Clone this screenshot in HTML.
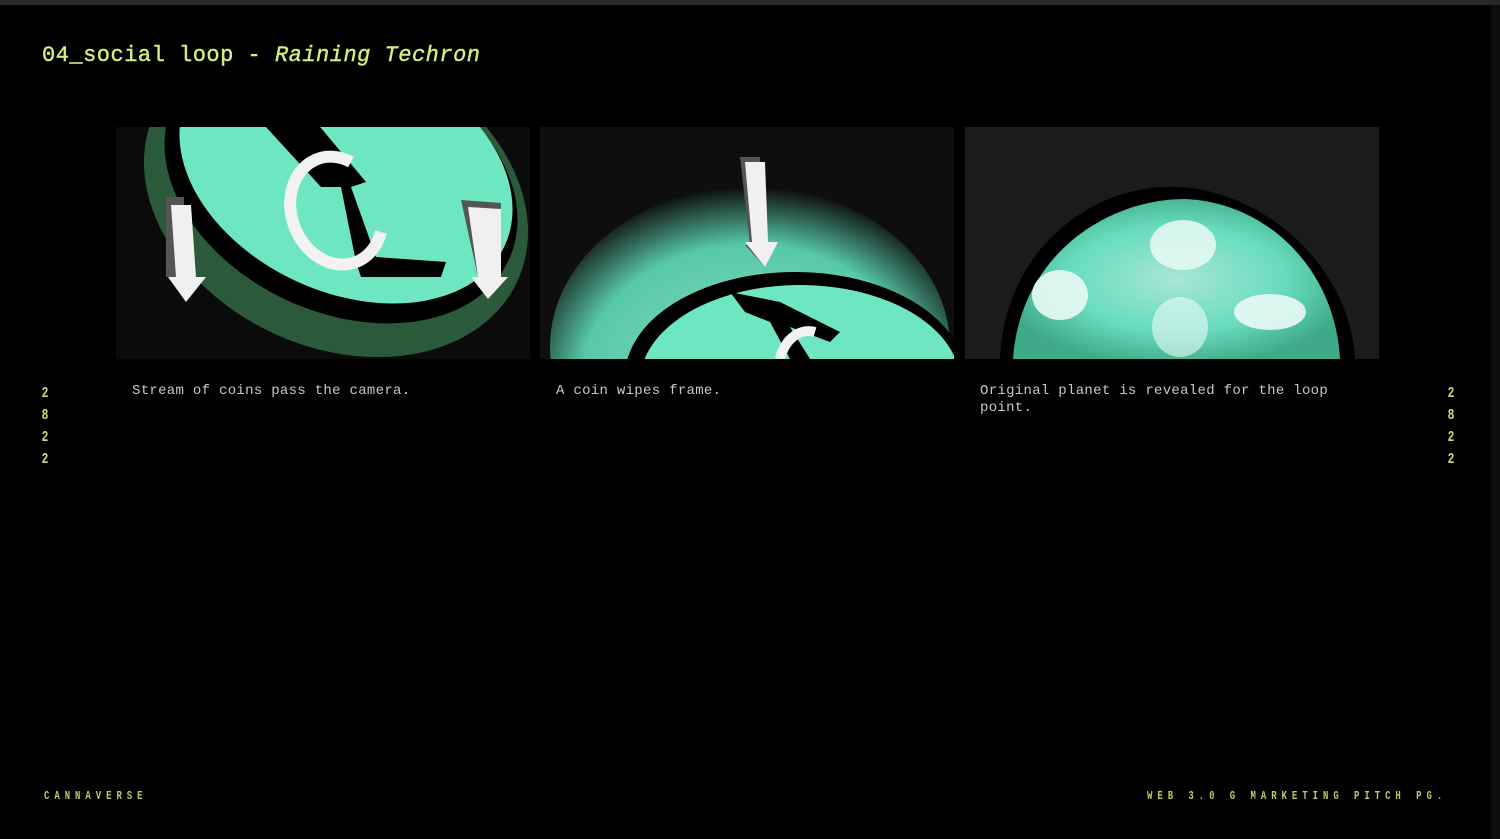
<!DOCTYPE html>
<html><head><style>
html,body{margin:0;padding:0;background:#000;width:1500px;height:839px;overflow:hidden;position:relative;font-family:"Liberation Mono",monospace}
.top{position:absolute;left:0;top:0;width:1500px;height:5px;background:#26272a}
.right{position:absolute;right:0;top:5px;width:9px;height:834px;background:#0d0d0e}
.title{position:absolute;left:42px;top:43px;font-size:22px;color:#d4f07c;letter-spacing:0.5px;white-space:nowrap;-webkit-text-stroke:0.4px #d4f07c}
.title i{font-style:italic}
.img{position:absolute;top:127px;width:414px;height:232px;overflow:hidden}
.cap{position:absolute;top:383px;font-size:14px;color:#c8c8c8;line-height:17px;letter-spacing:0.3px;width:380px}
.yr{position:absolute;top:383px;font-size:15px;font-weight:bold;color:#c9dc74;line-height:22px;width:10px;text-align:center;transform:scaleX(0.75)}
.foot{position:absolute;top:789px;font-size:12px;font-weight:bold;color:#b9cc6a;letter-spacing:6.6px;white-space:nowrap;transform:scaleX(0.75);transform-origin:left}
</style></head><body>
<div class="top"></div><div class="right"></div>
<div class="title">04_social loop - <i>Raining Techron</i></div>

<div class="img" style="left:116px;background:#0b0b0b">
<svg width="414" height="232">
<ellipse cx="220" cy="70" rx="200" ry="150" transform="rotate(25 220 70)" fill="#2a5a3a"/>
<ellipse cx="225" cy="55" rx="185" ry="130" transform="rotate(25 225 55)" fill="#000"/>
<ellipse cx="230" cy="45" rx="175" ry="120" transform="rotate(25 230 45)" fill="#6ee6c1"/>
<path d="M150 0 L200 -5 L250 55 L235 60 L260 130 L330 135 L325 150 L245 150 L240 135 L225 60 L205 60 Z" fill="#000"/>
<path d="M235 35 A45 55 -20 1 0 265 105" stroke="#f2f2f2" stroke-width="12" fill="none"/>
<path d="M50 70 L68 70 L68 150 L78 150 L70 175 L58 150 L50 150 Z" fill="#555"/>
<path d="M55 78 L75 78 L80 150 L90 150 L70 175 L52 150 L60 150 Z" fill="#f0f0f0"/>
<path d="M345 73 L385 76 L382 150 L392 150 L372 172 L355 150 L362 150 Z" fill="#555"/>
<path d="M352 80 L385 82 L385 150 L392 150 L372 172 L355 150 L362 150 Z" fill="#f0f0f0"/>
</svg></div>

<div class="img" style="left:540px;background:#0e0e0e">
<svg width="414" height="232">
<defs><radialGradient id="g1" cx="50%" cy="60%" r="60%"><stop offset="0" stop-color="#8fd9c6"/><stop offset="0.7" stop-color="#56c9a8"/><stop offset="1" stop-color="#0e0e0e"/></radialGradient></defs>
<ellipse cx="210" cy="220" rx="200" ry="160" fill="url(#g1)"/>
<ellipse cx="255" cy="250" rx="170" ry="105" fill="#000"/>
<ellipse cx="260" cy="255" rx="160" ry="97" fill="#6ee6c1"/>
<path d="M190 165 L240 175 L300 205 L290 215 L250 200 L270 232 L250 232 L230 195 L205 185 Z" fill="#000"/>
<path d="M240 232 A30 40 0 0 1 275 205" stroke="#f2f2f2" stroke-width="10" fill="none"/>
<path d="M200 30 L220 30 L222 118 L235 118 L225 140 L205 118 L210 118 Z" fill="#555"/>
<path d="M205 35 L225 35 L228 115 L238 115 L225 140 L205 115 L212 115 Z" fill="#f0f0f0"/>
</svg></div>

<div class="img" style="left:965px;background:#1b1b1b">
<svg width="414" height="232">
<defs><radialGradient id="g2" cx="50%" cy="50%" r="55%"><stop offset="0" stop-color="#a9e6d7"/><stop offset="0.6" stop-color="#68dcbd"/><stop offset="1" stop-color="#3faa8a"/></radialGradient></defs>
<path d="M35 232 C40 120 130 55 215 60 C300 65 385 140 390 232 Z" fill="#000"/>
<path d="M48 232 C55 130 140 72 220 72 C300 75 370 140 375 232 Z" fill="url(#g2)"/>
<ellipse cx="95" cy="168" rx="28" ry="25" fill="#eafaf5" opacity="0.9"/>
<ellipse cx="218" cy="118" rx="33" ry="25" fill="#eafaf5" opacity="0.85"/>
<ellipse cx="305" cy="185" rx="36" ry="18" fill="#eafaf5" opacity="0.9"/>
<ellipse cx="215" cy="200" rx="28" ry="30" fill="#eafaf5" opacity="0.6"/>
</svg></div>

<div class="cap" style="left:132px">Stream of coins pass the camera.</div>
<div class="cap" style="left:556px">A coin wipes frame.</div>
<div class="cap" style="left:980px">Original planet is revealed for the loop point.</div>

<div class="yr" style="left:40px">2<br>8<br>2<br>2</div>
<div class="yr" style="left:1446px">2<br>8<br>2<br>2</div>

<div class="foot" style="left:44px">CANNAVERSE</div>
<div class="foot" style="left:1147px">WEB 3.0  G MARKETING PITCH PG.</div>
</body></html>
